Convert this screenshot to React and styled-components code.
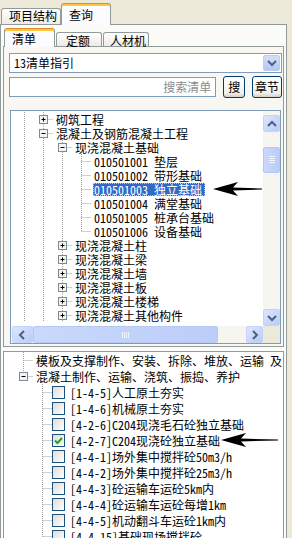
import React from 'react';
import styled, { createGlobalStyle } from 'styled-components';

const GlobalStyle = createGlobalStyle`
  html, body { margin: 0; padding: 0; background: #ece9d8; }
  body {
    font-family: "Noto Sans Mono CJK SC", "Noto Sans CJK SC", sans-serif;
    font-size: 12px;
    color: #000;
    overflow: hidden;
  }
`;

const Page = styled.div`
  width: 292px;
  height: 538px;
  overflow: hidden;
  position: relative;
`;

const TabStrip = styled.div`
  display: flex;
  align-items: flex-end;
  gap: ${({ $gap }) => $gap || 0}px;
  height: ${({ $h }) => $h}px;
  padding-left: ${({ $pl }) => $pl}px;
  position: relative;
  z-index: 1;
`;

const Tab = styled.div`
  box-sizing: border-box;
  width: ${({ $w }) => $w}px;
  height: ${({ $h }) => $h}px;
  margin-bottom: ${({ $active }) => ($active ? -1 : 0)}px;
  border: 1px solid #919b9c;
  border-bottom: none;
  border-radius: 3px 3px 0 0;
  border-top-color: ${({ $active }) => ($active ? '#e68b2c' : '#919b9c')};
  box-shadow: ${({ $active }) => ($active ? 'inset 0 2px 0 #ffc73c' : 'none')};
  background: ${({ $active }) => ($active ? '#fcfcfe' : 'linear-gradient(#ffffff, #ecebe5)')};
  padding: ${({ $pt }) => $pt || 0}px 0 0 ${({ $pl }) => $pl}px;
  line-height: ${({ $lh }) => $lh}px;
  white-space: nowrap;
`;

const OuterPanel = styled.div`
  box-sizing: border-box;
  width: 287px;
  height: 520px;
  border: 1px solid #919b9c;
  background: #fbfbf8;
  padding: 1px 2px 0;
`;

const InnerPanel = styled.div`
  box-sizing: border-box;
  width: 281px;
  border: 1px solid #919b9c;
  background: #f8f7f2;
  padding: 6px 1px 2px 5px;
  display: flex;
  flex-direction: column;
`;

const Combo = styled.div`
  box-sizing: border-box;
  width: 273px;
  height: 20px;
  border: 1px solid #7f9db9;
  background: #fff;
  display: flex;
  align-items: center;
  padding: 0 1px 0 4px;
`;

const ComboText = styled.span`
  flex: 1;
  line-height: 18px;
`;

const ComboButton = styled.div`
  box-sizing: border-box;
  width: 17px;
  height: 16px;
  border: 1px solid #b9cdf5;
  border-radius: 2px;
  background: linear-gradient(#d3defa, #b4c7f5);
  display: flex;
  align-items: center;
  justify-content: center;
`;

const SearchRow = styled.div`
  display: flex;
  align-items: center;
  margin-top: 3px;
  height: 22px;
`;

const SearchInput = styled.div`
  box-sizing: border-box;
  width: 208px;
  height: 20px;
  border: 1px solid #7f9db9;
  background: #fff;
  color: #8c8c8c;
  text-align: right;
  padding-right: 4px;
  line-height: 18px;
`;

const Button = styled.div`
  box-sizing: border-box;
  width: ${({ $w }) => $w}px;
  height: 22px;
  margin-left: ${({ $ml }) => $ml}px;
  border: 1px solid #003c74;
  border-radius: 3px;
  background: linear-gradient(#ffffff, #f0f0ea 80%, #d6d0c5);
  text-align: center;
  line-height: 20px;
`;

const TreeBox = styled.div`
  box-sizing: border-box;
  width: 271px;
  height: 234px;
  margin: 12px 0 0 1px;
  border: 1px solid #7f9db9;
  background: #fff;
  display: grid;
  grid-template-columns: 1fr 17px;
  grid-template-rows: 1fr 17px;
`;

const TreeArea = styled.div`
  overflow: hidden;
  padding: 1px 0 0 4px;
  position: relative;
`;

const Row = styled.div`
  display: flex;
  align-items: center;
  height: ${({ $h }) => $h}px;
  white-space: nowrap;
`;

const Label = styled.span`
  margin-left: ${({ $ml }) => $ml ?? 2}px;
  padding: 0 3px 0 1px;
  line-height: ${({ $h }) => $h - 1}px;
  background: ${({ $sel }) => ($sel ? '#316ac5' : 'transparent')};
  color: ${({ $sel }) => ($sel ? '#fff' : '#000')};
  outline: ${({ $sel }) => ($sel ? '1px dotted #d8c48a' : 'none')};
  outline-offset: -1px;
`;

const VScroll = styled.div`
  background: #f6f5ef;
  display: flex;
  flex-direction: column;
  padding-top: 4px;
`;

const HScroll = styled.div`
  background: #f6f5ef;
  display: flex;
  align-items: stretch;
  padding-left: 1px;
`;

const Corner = styled.div`
  background: #ece9d8;
`;

const ScrollBtn = styled.div`
  box-sizing: border-box;
  width: ${({ $w }) => $w || 17}px;
  height: ${({ $hh }) => $hh || 17}px;
  flex: none;
  border: 1px solid #c3d3fd;
  border-radius: 2px;
  background: linear-gradient(135deg, #dde6fd, #b9cbf7);
  display: flex;
  align-items: center;
  justify-content: center;
`;

const Thumb = styled.div`
  box-sizing: border-box;
  flex: none;
  width: ${({ $w }) => $w}px;
  height: ${({ $hh }) => $hh}px;
  margin: ${({ $m }) => $m};
  border: 1px solid #b4c8f6;
  border-radius: 2px;
  background: linear-gradient(90deg, #cad8fb, #bccdf8);
  display: flex;
  align-items: center;
  justify-content: center;
`;

const Spacer = styled.div`
  flex: 1;
`;

const LowerPanel = styled.div`
  box-sizing: border-box;
  width: 281px;
  height: 200px;
  margin-top: 4px;
  border: 1px solid #7f9db9;
  background: #fff;
  overflow: hidden;
  padding-left: 10px;
  position: relative;
`;

const Check = styled.span`
  box-sizing: border-box;
  width: 13px;
  height: 13px;
  flex: none;
  border: 1px solid #1c5180;
  background: linear-gradient(135deg, #dcdcd7, #ffffff);
  display: flex;
  align-items: center;
  justify-content: center;
`;

const Arrow = styled.svg`
  position: absolute;
  left: ${({ $x }) => $x}px;
  top: ${({ $y }) => $y}px;
`;

const DOT = '#a0a0a0';

// one indent column of the tree: vertical line, branch, expander box
function Guide({ kind, h, box }) {
  const c = 9.5;
  const mid = Math.floor(h / 2) + 0.5;
  const top = kind === 'v' || kind === 'tee' || kind === 'ell';
  const bottom = kind === 'v' || kind === 'tee';
  const branch = kind === 'tee' || kind === 'ell';
  return (
    <svg width="19" height={h} style={{ flex: 'none', display: 'block' }}>
      {top && <line x1={c} y1={0} x2={c} y2={bottom ? h : mid} stroke={DOT} strokeDasharray="1 1" />}
      {branch && <line x1={c} y1={mid} x2={19} y2={mid} stroke={DOT} strokeDasharray="1 1" />}
      {box && (
        <g>
          <rect x={5.5} y={mid - 4} width={8} height={8} fill="#f4f4f0" stroke="#7a8a99" />
          <line x1={7.5} y1={mid} x2={11.5} y2={mid} stroke="#000" />
          {box === '+' && <line x1={c} y1={mid - 2} x2={c} y2={mid + 2} stroke="#000" />}
        </g>
      )}
    </svg>
  );
}

function TreeRow({ guides, box, h, text, sel, check, checked }) {
  return (
    <Row $h={h}>
      {guides.map((g, i) => (
        <Guide key={i} kind={g} h={h} box={i === guides.length - 1 ? box : null} />
      ))}
      {check && (
        <Check>
          {checked && (
            <svg width="9" height="9">
              <polyline points="1,4.5 3.5,7 8,2" fill="none" stroke="#21a121" strokeWidth="2" />
            </svg>
          )}
        </Check>
      )}
      <Label $h={h} $sel={sel} $ml={check ? 4 : 2}>{text}</Label>
    </Row>
  );
}

const Chevron = ({ dir }) => {
  const pts = {
    up: '4,10 8,6 12,10',
    down: '4,6 8,10 12,6',
    left: '9,4 5,8 9,12',
    right: '6,4 10,8 6,12',
  }[dir];
  return (
    <svg width="16" height="16">
      <polyline points={pts} fill="none" stroke="#4d6185" strokeWidth="2" />
    </svg>
  );
};

const Grip = ({ vertical }) => (
  <svg width="8" height="8">
    {[1, 3, 5, 7].map((p) =>
      vertical ? (
        <line key={p} x1={1} y1={p - 0.5} x2={7} y2={p - 0.5} stroke="#eef3fe" />
      ) : (
        <line key={p} x1={p - 0.5} y1={1} x2={p - 0.5} y2={7} stroke="#eef3fe" />
      )
    )}
  </svg>
);

const upper = [
  { g: ['v', 'tee'], box: '+', t: '砌筑工程' },
  { g: ['v', 'tee'], box: '-', t: '混凝土及钢筋混凝土工程' },
  { g: ['v', 'v', 'tee'], box: '-', t: '现浇混凝土基础' },
  { g: ['v', 'v', 'v', 'tee'], t: '010501001  垫层' },
  { g: ['v', 'v', 'v', 'tee'], t: '010501002  带形基础' },
  { g: ['v', 'v', 'v', 'tee'], t: '010501003  独立基础', sel: true },
  { g: ['v', 'v', 'v', 'tee'], t: '010501004  满堂基础' },
  { g: ['v', 'v', 'v', 'tee'], t: '010501005  桩承台基础' },
  { g: ['v', 'v', 'v', 'ell'], t: '010501006  设备基础' },
  { g: ['v', 'v', 'tee'], box: '+', t: '现浇混凝土柱' },
  { g: ['v', 'v', 'tee'], box: '+', t: '现浇混凝土梁' },
  { g: ['v', 'v', 'tee'], box: '+', t: '现浇混凝土墙' },
  { g: ['v', 'v', 'tee'], box: '+', t: '现浇混凝土板' },
  { g: ['v', 'v', 'tee'], box: '+', t: '现浇混凝土楼梯' },
  { g: ['v', 'v', 'tee'], box: '+', t: '现浇混凝土其他构件' },
];

const lower = [
  { g: ['tee'], t: '模板及支撑制作、安装、拆除、堆放、运输 及' },
  { g: ['ell'], box: '-', t: '混凝土制作、运输、浇筑、振捣、养护' },
  { g: ['none', 'tee'], c: true, t: '[1-4-5]人工原土夯实' },
  { g: ['none', 'tee'], c: true, t: '[1-4-6]机械原土夯实' },
  { g: ['none', 'tee'], c: true, t: '[4-2-6]C204现浇毛石砼独立基础' },
  { g: ['none', 'tee'], c: true, checked: true, t: '[4-2-7]C204现浇砼独立基础' },
  { g: ['none', 'tee'], c: true, t: '[4-4-1]场外集中搅拌砼50m3/h' },
  { g: ['none', 'tee'], c: true, t: '[4-4-2]场外集中搅拌砼25m3/h' },
  { g: ['none', 'tee'], c: true, t: '[4-4-3]砼运输车运砼5km内' },
  { g: ['none', 'tee'], c: true, t: '[4-4-4]砼运输车运砼每增1km' },
  { g: ['none', 'tee'], c: true, t: '[4-4-5]机动翻斗车运砼1km内' },
  { g: ['none', 'tee'], c: true, t: '[4-4-15]基础现场搅拌砼' },
];

const ArrowShape = ({ x, y, w }) => (
  <Arrow $x={x} $y={y} width={w} height="16" viewBox={`0 0 ${w} 16`}>
    <path
      d={`M0 8 L25 1 L20 6.5 L${w} 7.6 L${w} 8.4 L20 9.5 L25 15 Z`}
      fill="#000"
    />
  </Arrow>
);

export default function App() {
  return (
    <Page>
      <GlobalStyle />
      <TabStrip $h={24} $pl={1}>
        <Tab $w={60} $h={16} $pl={7} $lh={14}>项目结构</Tab>
        <Tab $w={50} $h={22} $pl={7} $pt={2} $lh={18} $active>查询</Tab>
      </TabStrip>
      <OuterPanel>
        <TabStrip $h={20} $pl={1} $gap={1}>
          <Tab $w={51} $h={19} $pl={7} $pt={2} $lh={16} $active>清单</Tab>
          <Tab $w={46} $h={14} $pl={9} $pt={1} $lh={13}>定额</Tab>
          <Tab $w={46} $h={14} $pl={6} $pt={1} $lh={13}>人材机</Tab>
        </TabStrip>
        <InnerPanel>
          <Combo>
            <ComboText>13清单指引</ComboText>
            <ComboButton>
              <Chevron dir="down" />
            </ComboButton>
          </Combo>
          <SearchRow>
            <SearchInput>搜索清单</SearchInput>
            <Button $w={22} $ml={7}>搜</Button>
            <Button $w={30} $ml={7}>章节</Button>
          </SearchRow>
          <TreeBox>
            <TreeArea>
              {upper.map((r, i) => (
                <TreeRow key={i} guides={r.g} box={r.box} h={14} text={r.t} sel={r.sel} />
              ))}
            </TreeArea>
            <VScroll>
              <ScrollBtn><Chevron dir="up" /></ScrollBtn>
              <Thumb $w={17} $hh={26} $m="15px 0 0">
                <Grip vertical />
              </Thumb>
              <Spacer />
              <ScrollBtn><Chevron dir="down" /></ScrollBtn>
            </VScroll>
            <HScroll>
              <ScrollBtn $w={21}><Chevron dir="left" /></ScrollBtn>
              <Thumb $w={185} $hh={17}>
                <Grip />
              </Thumb>
              <Spacer />
              <ScrollBtn><Chevron dir="right" /></ScrollBtn>
            </HScroll>
            <Corner />
          </TreeBox>
        </InnerPanel>
        <LowerPanel>
          {lower.map((r, i) => (
            <TreeRow key={i} guides={r.g} box={r.box} h={16} text={r.t} check={r.c} checked={r.checked} />
          ))}
        </LowerPanel>
      </OuterPanel>
      <ArrowShape x={213} y={181} w={49} />
      <ArrowShape x={221} y={432} w={57} />
    </Page>
  );
}
